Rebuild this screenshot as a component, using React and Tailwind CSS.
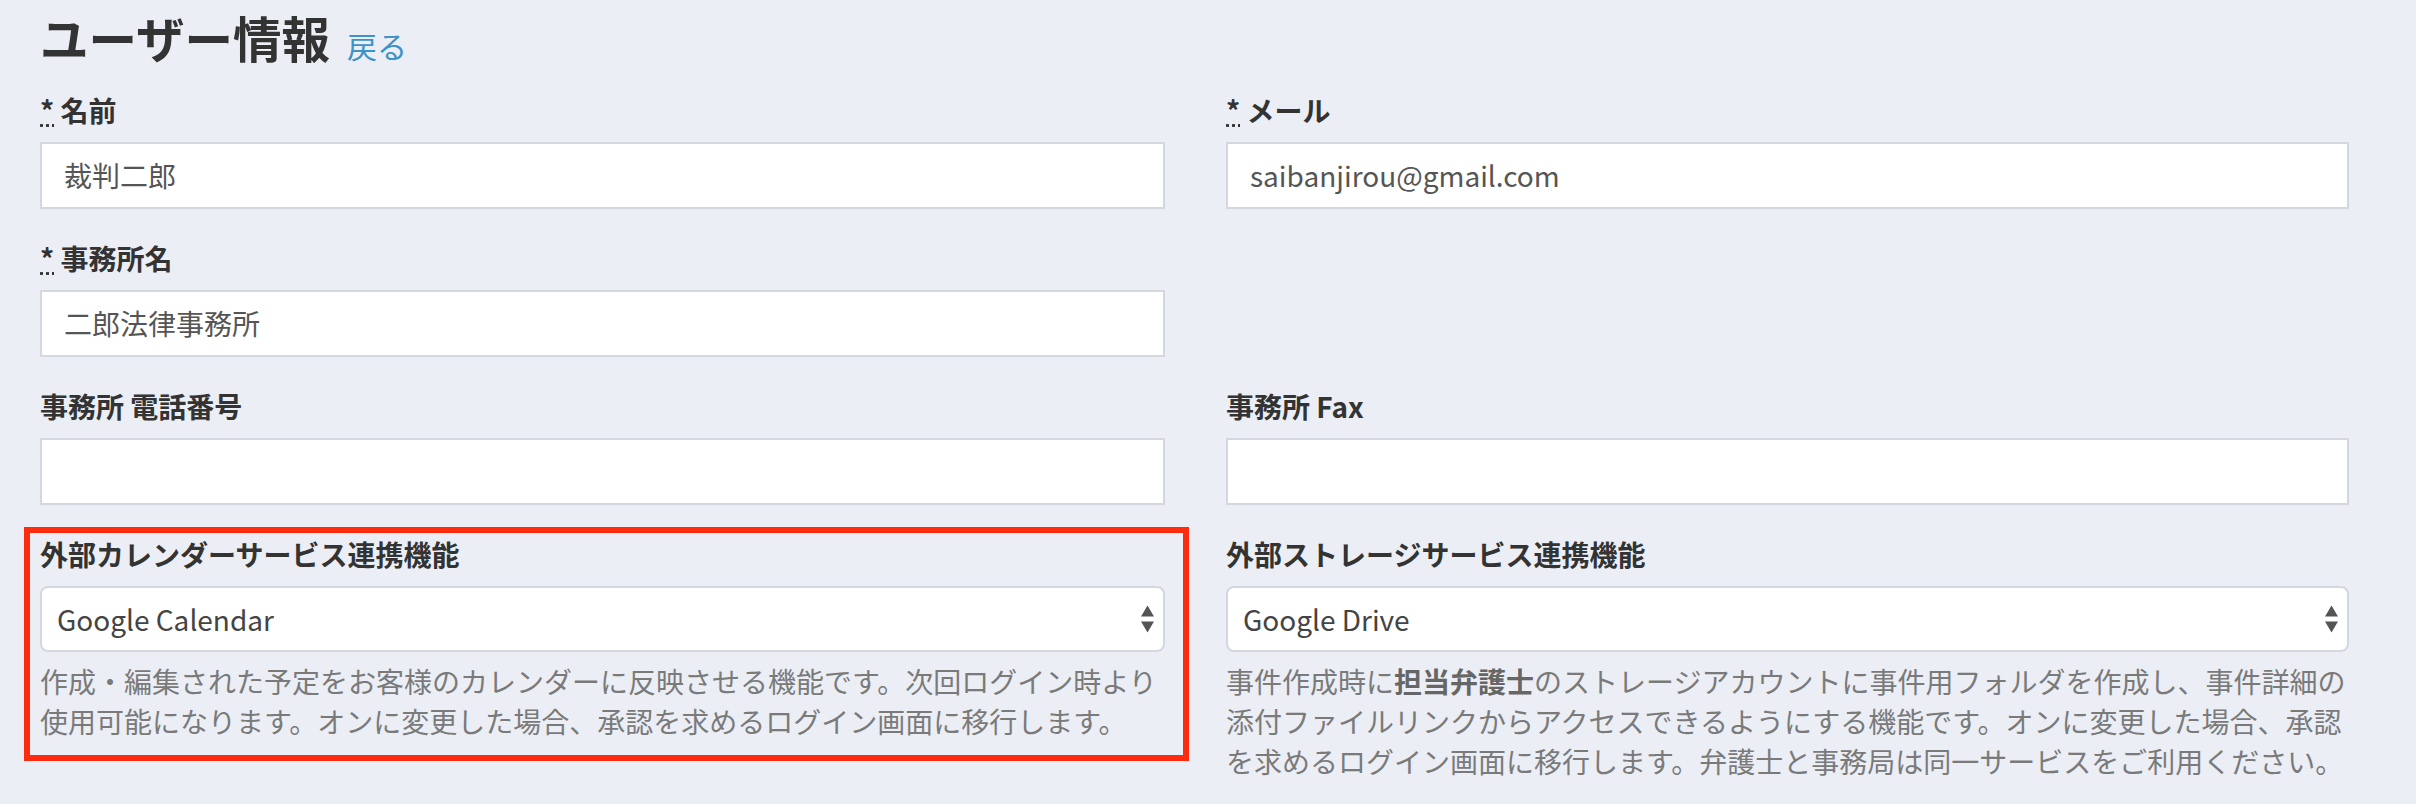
import React from 'react'

function Required() {
  return (
    <abbr title="required" className="underline decoration-dotted">
      *
    </abbr>
  )
}

function SelectArrows() {
  return (
    <svg width="13" height="27" viewBox="0 0 13 27" className="absolute right-[9px] top-1/2 -translate-y-1/2" fill="#555">
      <polygon points="6.5,0 13,11 0,11" />
      <polygon points="0,16 13,16 6.5,27" />
    </svg>
  )
}

function Field({ label, required, children, className = '' }) {
  return (
    <div className={`mb-[28px] ${className}`}>
      <label className="block text-[28px] leading-[42px] font-bold text-[#333] mb-[11px]">
        {required && (
          <>
            <Required />{' '}
          </>
        )}
        {label}
      </label>
      {children}
    </div>
  )
}

function TextInput({ value }) {
  return (
    <div className="h-[67px] bg-white border-2 border-[#d4d7e0] px-[22px] pb-[2px] flex items-center text-[28px] leading-[42px] text-[#555]">
      {value}
    </div>
  )
}

function SelectBox({ value }) {
  return (
    <div className="relative h-[66px] bg-white border-2 border-[#d4d7e0] rounded-[8px] pl-[15px] pb-[1px] flex items-center text-[28px] leading-[42px] text-[#444]">
      {value}
      <SelectArrows />
    </div>
  )
}

export default function App() {
  return (
    <div className="min-h-screen bg-[#ebeef5] font-['Noto_Sans_CJK_JP','Noto_Sans_CJK_SC',sans-serif] pl-[40px] pt-[9px]">
      {/* Header */}
      <div className="flex items-baseline mb-[21px]">
        <h1 className="text-[48.5px] leading-[56px] font-bold text-[#333]">ユーザー情報</h1>
        <a className="ml-[17px] text-[30px] text-[#3b93c8]">戻る</a>
      </div>

      <div className="grid grid-cols-[1125px_1123px] gap-x-[61px]">
        <Field label="名前" required>
          <TextInput value="裁判二郎" />
        </Field>
        <Field label="メール" required>
          <TextInput value="saibanjirou@gmail.com" />
        </Field>

        <Field label="事務所名" required>
          <TextInput value="二郎法律事務所" />
        </Field>
        <div />

        <Field label="事務所 電話番号">
          <TextInput value="" />
        </Field>
        <Field label="事務所 Fax">
          <TextInput value="" />
        </Field>

        <Field label="外部カレンダーサービス連携機能" className="relative self-start !mb-0">
          <div className="absolute -left-[16px] -right-[24px] -top-[6px] -bottom-[20px] border-[6px] border-[#ff2b0f] pointer-events-none" />
          <SelectBox value="Google Calendar" />
          <p className="mt-[9px] text-[28px] leading-[40px] text-[#7a7a7a]">
            作成・編集された予定をお客様のカレンダーに反映させる機能です。次回ログイン時より使用可能になります。オンに変更した場合、承認を求めるログイン画面に移行します。
          </p>
        </Field>
        <Field label="外部ストレージサービス連携機能" className="!mb-0">
          <SelectBox value="Google Drive" />
          <p className="mt-[9px] text-[28px] leading-[40px] text-[#7a7a7a]">
            事件作成時に<b className="font-bold text-[#666]">担当弁護士</b>のストレージアカウントに事件用フォルダを作成し、事件詳細の添付ファイルリンクからアクセスできるようにする機能です。オンに変更した場合、承認を求めるログイン画面に移行します。弁護士と事務局は同一サービスをご利用ください。
          </p>
        </Field>
      </div>
    </div>
  )
}
